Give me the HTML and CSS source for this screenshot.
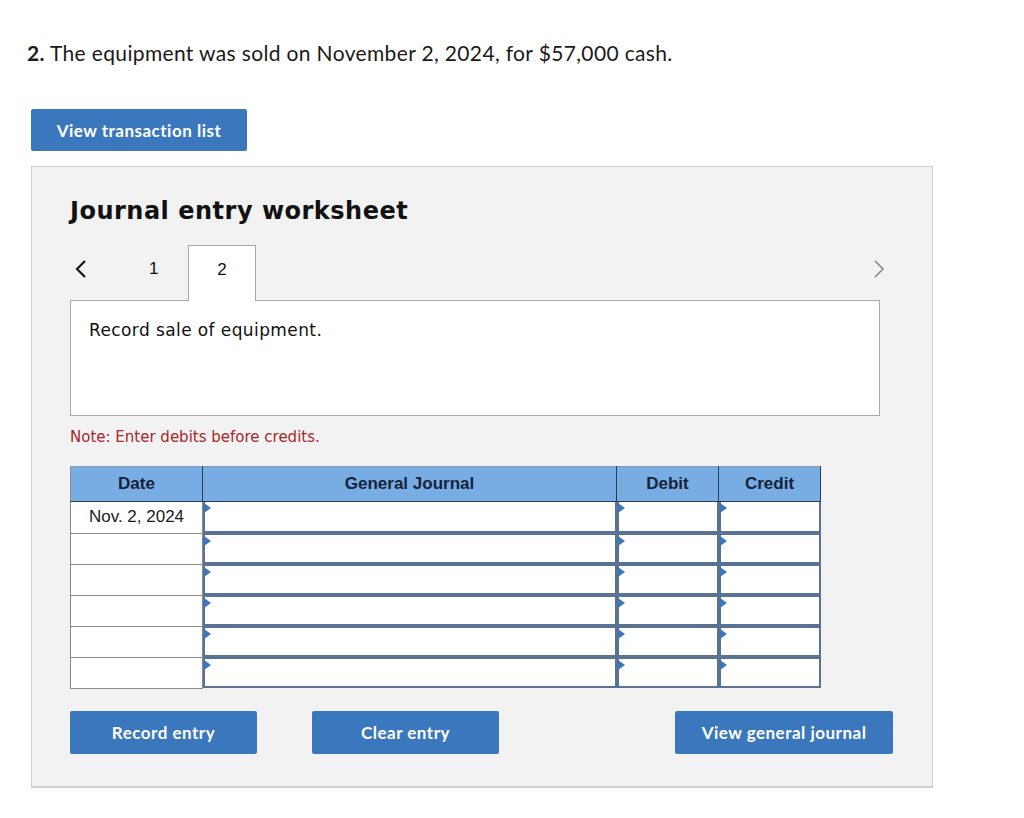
FILE: index.html
```html
<!DOCTYPE html>
<html>
<head>
<meta charset="utf-8">
<link rel="stylesheet" href="styles.css">
</head>
<body>
<p class="question"><b>2.</b> The equipment was sold on November 2, 2024, for $57,000 cash.</p>
<button class="btn btn-list">View transaction list</button>
<section class="panel">
  <h2 class="title">Journal entry worksheet</h2>
  <div class="tabs">
    <span class="arrow arrow-left">
      <svg width="14" height="20" viewBox="0 0 14 20"><path d="M11 2 L3 10 L11 18" fill="none" stroke="#111" stroke-width="2.2"/></svg>
    </span>
    <span class="tab">1</span>
    <span class="tab tab-active">2</span>
    <span class="spacer"></span>
    <span class="arrow arrow-right">
      <svg width="14" height="20" viewBox="0 0 14 20"><path d="M3 2 L11 10 L3 18" fill="none" stroke="#888" stroke-width="1.6"/></svg>
    </span>
  </div>
  <div class="desc">Record sale of equipment.</div>
  <p class="note">Note: Enter debits before credits.</p>
  <table class="journal">
    <thead>
      <tr><th class="c-date">Date</th><th class="c-gj">General Journal</th><th class="c-amt">Debit</th><th class="c-amt">Credit</th></tr>
    </thead>
    <tbody>
      <tr><td class="date">Nov. 2, 2024</td><td class="in"><div class="box"></div></td><td class="in"><div class="box"></div></td><td class="in"><div class="box"></div></td></tr>
      <tr><td class="date"></td><td class="in"><div class="box"></div></td><td class="in"><div class="box"></div></td><td class="in"><div class="box"></div></td></tr>
      <tr><td class="date"></td><td class="in"><div class="box"></div></td><td class="in"><div class="box"></div></td><td class="in"><div class="box"></div></td></tr>
      <tr><td class="date"></td><td class="in"><div class="box"></div></td><td class="in"><div class="box"></div></td><td class="in"><div class="box"></div></td></tr>
      <tr><td class="date"></td><td class="in"><div class="box"></div></td><td class="in"><div class="box"></div></td><td class="in"><div class="box"></div></td></tr>
      <tr><td class="date"></td><td class="in"><div class="box"></div></td><td class="in"><div class="box"></div></td><td class="in"><div class="box"></div></td></tr>
    </tbody>
  </table>
  <div class="actions">
    <button class="btn btn-record">Record entry</button>
    <button class="btn btn-clear">Clear entry</button>
    <span class="spacer"></span>
    <button class="btn btn-view">View general journal</button>
  </div>
</section>
</body>
</html>
```
FILE: styles.css
```css
* { box-sizing: border-box; }
body {
  margin: 0;
  padding: 0 0 0 27px;
  background: #fff;
  font-family: Lato, "Open Sans", sans-serif;
  color: #1a1a1a;
}
.question {
  margin: 0;
  padding-top: 40px;
  font-size: 21px;
  letter-spacing: 0.35px;
  line-height: 26px;
}
.btn {
  display: inline-flex;
  align-items: center;
  justify-content: center;
  border: none;
  border-radius: 2px;
  background: #3a77bd;
  color: #fff;
  font-family: Lato, "Open Sans", sans-serif;
  font-weight: 700;
  font-size: 17px;
  letter-spacing: 0.5px;
  padding: 0;
}
.btn-list {
  margin: 43px 0 0 4px;
  width: 216px;
  height: 42px;
}
.panel {
  margin: 15px 0 0 4px;
  width: 902px;
  height: 622px;
  background: #f2f2f2;
  border: 1px solid #cfcfcf;
  border-bottom: 2px solid #cfcfcf;
  padding: 0 52px 0 38px;
}
.title {
  margin: 30px 0 0 0;
  font-family: "DejaVu Sans", Verdana, sans-serif;
  font-weight: 700;
  font-size: 24px;
  letter-spacing: 0.5px;
  line-height: 28px;
  color: #111;
}
.tabs {
  display: flex;
  align-items: stretch;
  height: 55px;
  margin-top: 20px;
}
.arrow { display: flex; align-items: center; padding-bottom: 8px; }
.arrow-left { width: 70px; padding-left: 4px; }
.arrow-right { padding-right: 0; margin-right: -6px; }
.tab {
  display: flex;
  align-items: center;
  justify-content: center;
  width: 50px;
  font-family: "Liberation Sans", Arial, sans-serif;
  font-size: 17px;
  color: #111;
  padding-bottom: 8px;
}
.tab:nth-child(2) { width: 48px; justify-content: flex-start; padding-left: 9px; }
.tab-active {
  width: 68px;
  background: #fff;
  border: 1px solid #a6a6a6;
  border-bottom: none;
  margin-bottom: -1px;
  position: relative;
  z-index: 1;
}
.spacer { flex: 1; }
.desc {
  height: 116px;
  background: #fff;
  border: 1px solid #aaa;
  padding: 18px 18px;
  font-family: "DejaVu Sans", Verdana, sans-serif;
  font-size: 17px;
  letter-spacing: 0.4px;
  line-height: 22px;
  color: #111;
}
.note {
  margin: 12px 0 0 0;
  font-family: "DejaVu Sans", Verdana, sans-serif;
  font-size: 15px;
  line-height: 18px;
  color: #a8282a;
}
.journal {
  margin-top: 20px;
  border-collapse: collapse;
  table-layout: fixed;
  width: 751px;
  font-family: "Liberation Sans", Arial, sans-serif;
}
.journal th {
  height: 35px;
  background: #78ade3;
  border: 1px solid #2b3c55;
  border-top-color: #8c9bb0;
  font-size: 17px;
  font-weight: 700;
  color: #14233a;
  padding: 0;
}
.journal th:first-child { border-left-color: #8a8a8a; }
.c-date { width: 132px; }
.c-gj { width: 414px; }
.c-amt { width: 102px; }
.journal td { padding: 0; height: 31px; }
.journal td.date {
  background: #fff;
  border: 1px solid #8a8a8a;
  text-align: center;
  font-size: 17px;
  color: #1a1a1a;
}
.journal td.in { background: #5b7392; }
.box {
  position: relative;
  height: 30px;
  background: #fff;
  border: 2px solid #5b7392;
  border-top-width: 1px;
  border-bottom-width: 2px;
  margin-top: 1px;
}
.journal tbody tr:first-child .box { border-top-width: 0; margin-top: 0; height: 31px; }
.box::before {
  content: "";
  position: absolute;
  left: -1px;
  top: 1px;
  border-left: 7px solid #3a77bd;
  border-top: 5px solid transparent;
  border-bottom: 5px solid transparent;
}
.actions {
  display: flex;
  margin-top: 22px;
  margin-right: -13px;
}
.actions .btn { height: 43px; }
.btn-record { width: 187px; }
.btn-clear { width: 187px; margin-left: 55px; }
.btn-view { width: 218px; }
```
